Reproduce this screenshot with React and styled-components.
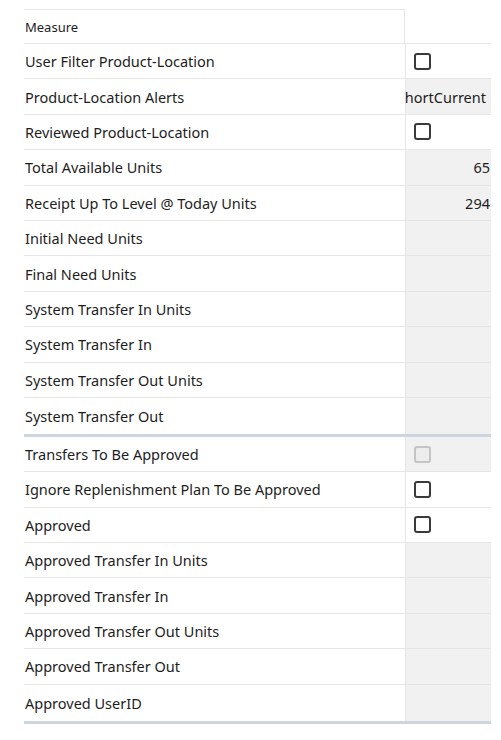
import React from "react";
import styled, { createGlobalStyle } from "styled-components";

const GlobalStyle = createGlobalStyle`
  body {
    margin: 0;
    background: #ffffff;
    font-family: "Noto Sans", "Open Sans", Arial, sans-serif;
    color: #1d1d1d;
  }
`;

// rows above the divider, then rows below it
const topRows = [
  { label: "User Filter Product-Location", kind: "check" },
  { label: "Product-Location Alerts", kind: "text", value: "hortCurrent" },
  { label: "Reviewed Product-Location", kind: "check" },
  { label: "Total Available Units", kind: "num", value: "65" },
  { label: "Receipt Up To Level @ Today Units", kind: "num", value: "294" },
  { label: "Initial Need Units", kind: "empty" },
  { label: "Final Need Units", kind: "empty" },
  { label: "System Transfer In Units", kind: "empty" },
  { label: "System Transfer In", kind: "empty" },
  { label: "System Transfer Out Units", kind: "empty" },
  { label: "System Transfer Out", kind: "empty" },
];

const bottomRows = [
  { label: "Transfers To Be Approved", kind: "disabled" },
  { label: "Ignore Replenishment Plan To Be Approved", kind: "check" },
  { label: "Approved", kind: "check" },
  { label: "Approved Transfer In Units", kind: "empty" },
  { label: "Approved Transfer In", kind: "empty" },
  { label: "Approved Transfer Out Units", kind: "empty" },
  { label: "Approved Transfer Out", kind: "empty" },
  { label: "Approved UserID", kind: "empty" },
];

const App = () => {
  const renderRow = (row, last) => {
    const editable = row.kind === "check";
    return (
      <Row key={row.label} $last={last}>
        <Label>{row.label}</Label>
        <Value $readonly={!editable} $align={row.kind}>
          {editable && <Box />}
          {row.kind === "disabled" && <Box $disabled />}
          {(row.kind === "num" || row.kind === "text") && <span>{row.value}</span>}
        </Value>
      </Row>
    );
  };

  return (
    <>
      <GlobalStyle />
      <Grid>
        <HeadRow>
          <HeadLabel>Measure</HeadLabel>
          <HeadValue />
        </HeadRow>
        {topRows.map((r, i) => renderRow(r, i === topRows.length - 1))}
        <Divider />
        {bottomRows.map((r, i) => renderRow(r, i === bottomRows.length - 1))}
        <Divider />
      </Grid>
    </>
  );
};

const Grid = styled.div`
  width: 467px;
  margin: 9px 0 0 24px;
  display: flex;
  flex-direction: column;
`;

const HeadRow = styled.div`
  display: flex;
  height: 35px;
  box-sizing: border-box;
  border-bottom: 1px solid #e6e6e6;
`;

const HeadLabel = styled.div`
  width: 380px;
  box-sizing: border-box;
  border-top: 1px solid #e6e6e6;
  display: flex;
  align-items: center;
  padding-left: 1px;
  font-size: 13px;
`;

const HeadValue = styled.div`
  flex: 1;
  border-left: 1px solid #e6e6e6;
`;

const Row = styled.div`
  display: flex;
  height: ${(p) => (p.$last ? "36px" : "35.4px")};
  box-sizing: border-box;
  border-bottom: ${(p) => (p.$last ? "none" : "1px solid #e6e6e6")};
`;

const Label = styled.div`
  width: 380px;
  flex-shrink: 0;
  display: flex;
  align-items: center;
  padding-left: 1px;
  font-size: 14.5px;
  white-space: nowrap;
`;

const Value = styled.div`
  flex: 1;
  min-width: 0;
  box-sizing: border-box;
  border-left: 1px solid #e6e6e6;
  background: ${(p) => (p.$readonly ? "#f1f1f1" : "#ffffff")};
  display: flex;
  align-items: center;
  justify-content: ${(p) =>
    p.$align === "num" || p.$align === "text" ? "flex-end" : "flex-start"};
  padding: ${(p) =>
    p.$align === "num" ? "0 1px 0 0" : p.$align === "text" ? "0 5px 0 0" : "0 0 0 8px"};
  font-size: 14.5px;
  white-space: nowrap;
`;

const Box = styled.span`
  width: 17px;
  height: 17px;
  box-sizing: border-box;
  border: 2px solid ${(p) => (p.$disabled ? "#c4c4c4" : "#3a3a3a")};
  border-radius: 3px;
  background: ${(p) => (p.$disabled ? "#ececec" : "#ffffff")};
  flex-shrink: 0;
`;

const Divider = styled.div`
  height: 3px;
  background: #cdd6de;
`;

export default App;
